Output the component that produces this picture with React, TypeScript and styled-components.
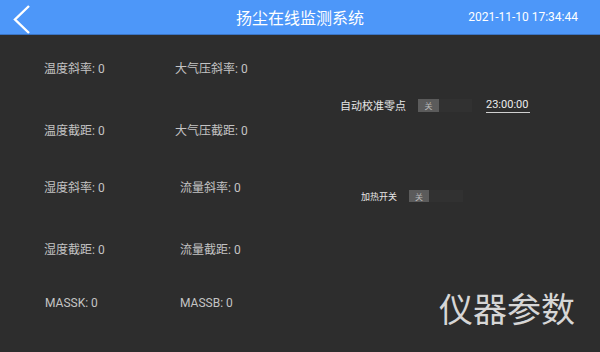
import styled, { createGlobalStyle } from "styled-components";

const GlobalStyle = createGlobalStyle`
  body {
    margin: 0;
    background: #2d2d2d;
    font-family: Roboto, "Noto Sans CJK SC", sans-serif;
  }
`;

const Screen = styled.div`
  width: 600px;
  height: 352px;
  display: flex;
  flex-direction: column;
  background: #2d2d2d;
  overflow: hidden;
`;

const Header = styled.header`
  height: 34px;
  flex-shrink: 0;
  display: grid;
  grid-template-columns: 1fr auto 1fr;
  align-items: center;
  background: #4d97f9;
  border-bottom: 1px solid #3a74c4;
  color: #ffffff;
`;

const BackButton = styled.button`
  justify-self: start;
  width: 22px;
  height: 34px;
  margin-left: 10px;
  padding: 0;
  border: none;
  background: none;
  cursor: pointer;
`;

const Title = styled.h1`
  margin: 0;
  font-size: 16px;
  font-weight: 400;
  font-family: "Noto Sans CJK SC", sans-serif;
`;

const Clock = styled.div`
  justify-self: end;
  margin-right: 22px;
  font-size: 12px;
`;

const Body = styled.main`
  flex: 1;
  display: grid;
  grid-template-columns: 300px 300px;
`;

const ParamGrid = styled.div`
  display: grid;
  grid-template-columns: 131px auto;
  grid-template-rows: 62px 57px 62px 53px 24px;
  align-content: start;
  padding: 22px 0 0 44px;
`;

const Param = styled.div<{ $indent?: number }>`
  height: 24px;
  line-height: 24px;
  padding-left: ${(p) => p.$indent ?? 0}px;
  font-size: 12px;
  color: #c4c4c4;
  white-space: nowrap;
`;

const SidePanel = styled.div`
  display: flex;
  flex-direction: column;
`;

const SettingRow = styled.div<{ $top: number; $left: number; $size: number }>`
  display: flex;
  align-items: center;
  height: 14px;
  margin-top: ${(p) => p.$top}px;
  margin-left: ${(p) => p.$left}px;
  font-size: ${(p) => p.$size}px;
  color: #e6e6e6;
`;

const SettingLabel = styled.span`
  font-family: "Noto Sans CJK SC", sans-serif;
  white-space: nowrap;
`;

const SwitchTrack = styled.div<{ $width: number; $height: number }>`
  display: flex;
  width: ${(p) => p.$width}px;
  height: ${(p) => p.$height}px;
  margin-left: 12px;
  background: #313131;
`;

const SwitchKnob = styled.div<{ $knob: number }>`
  width: ${(p) => p.$knob}px;
  display: flex;
  align-items: center;
  justify-content: center;
  background: #5b5b5b;
  color: #b8b8b8;
  font-size: 8px;
  font-family: "Noto Sans CJK SC", sans-serif;
`;

const TimeField = styled.div`
  width: 44px;
  margin-left: 14px;
  padding-bottom: 1px;
  border-bottom: 1px solid #cfcfcf;
  font-size: 11px;
  color: #ececec;
`;

const PageName = styled.div`
  margin-top: auto;
  align-self: flex-end;
  margin-right: 25px;
  margin-bottom: 27px;
  font-size: 34px;
  line-height: 1;
  color: #d6d6d6;
  font-family: "Noto Sans CJK SC", sans-serif;
`;

const params: { label: string; indent?: number }[][] = [
  [{ label: "温度斜率: 0" }, { label: "大气压斜率: 0" }],
  [{ label: "温度截距: 0" }, { label: "大气压截距: 0" }],
  [{ label: "湿度斜率: 0" }, { label: "流量斜率: 0", indent: 5 }],
  [{ label: "湿度截距: 0" }, { label: "流量截距: 0", indent: 5 }],
  [{ label: "MASSK: 0", indent: 1 }, { label: "MASSB: 0", indent: 5 }],
];

export default function App() {
  return (
    <>
      <GlobalStyle />
      <Screen>
        <Header>
          <BackButton aria-label="返回">
            <svg width="22" height="34" viewBox="0 0 22 34">
              <polyline
                points="19,6 5,19.5 19,33"
                fill="none"
                stroke="#ffffff"
                strokeWidth="2.4"
              />
            </svg>
          </BackButton>
          <Title>扬尘在线监测系统</Title>
          <Clock>2021-11-10 17:34:44</Clock>
        </Header>
        <Body>
          <ParamGrid>
            {params.flat().map((p) => (
              <Param key={p.label} $indent={p.indent}>
                {p.label}
              </Param>
            ))}
          </ParamGrid>
          <SidePanel>
            <SettingRow $top={63} $left={40} $size={11}>
              <SettingLabel>自动校准零点</SettingLabel>
              <SwitchTrack $width={54} $height={13}>
                <SwitchKnob $knob={21}>关</SwitchKnob>
              </SwitchTrack>
              <TimeField>23:00:00</TimeField>
            </SettingRow>
            <SettingRow $top={77} $left={61} $size={9}>
              <SettingLabel>加热开关</SettingLabel>
              <SwitchTrack $width={54} $height={12}>
                <SwitchKnob $knob={20}>关</SwitchKnob>
              </SwitchTrack>
            </SettingRow>
            <PageName>仪器参数</PageName>
          </SidePanel>
        </Body>
      </Screen>
    </>
  );
}
